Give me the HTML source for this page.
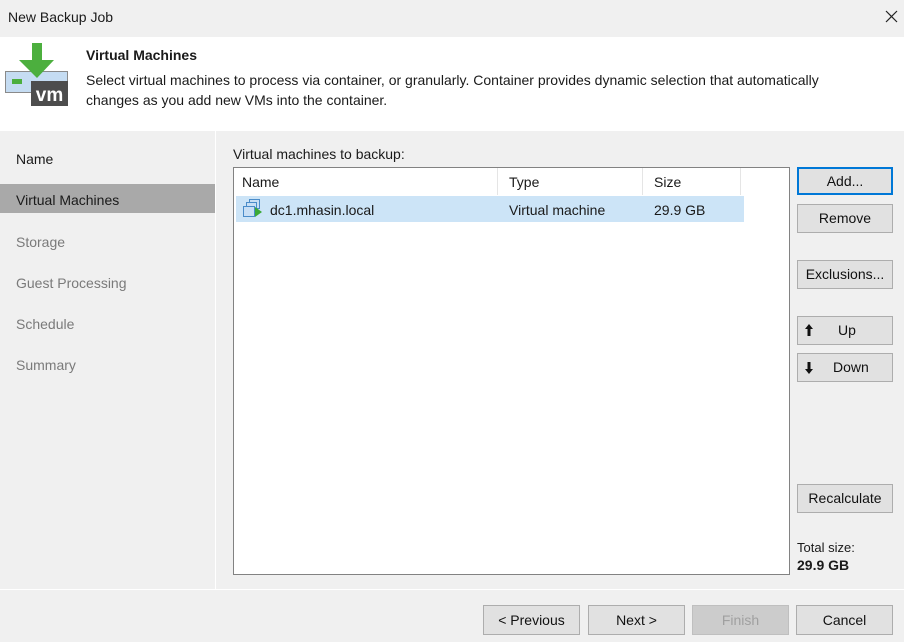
<!DOCTYPE html>
<html><head><meta charset="utf-8"><style>
*{box-sizing:border-box;margin:0;padding:0}
body{width:904px;height:642px;background:#f0f0f0;font-family:"Liberation Sans",sans-serif;font-size:14px;color:#1a1a1a;position:relative;overflow:hidden}
.a{position:absolute}
.btn{position:absolute;background:#e1e1e1;border:1px solid #adadad;text-align:center;font-size:14px;line-height:26px;color:#111}
.nav{position:absolute;left:16px;font-size:14px}
</style></head><body>
<div class="a" style="left:8px;top:9px;font-size:14px">New Backup Job</div>
<svg class="a" style="left:885px;top:10px" width="13" height="13"><path d="M1 1L12 12M12 1L1 12" stroke="#222" stroke-width="1.2"/></svg>
<div class="a" style="left:0;top:37px;width:904px;height:94px;background:#fff"></div>
<svg class="a" style="left:0;top:36px" width="80" height="80">
<rect x="5.5" y="35.5" width="62" height="21" fill="#c5dcf2" stroke="#8a8a8a"/>
<rect x="12" y="43" width="10" height="5" fill="#4caf3e"/>
<rect x="31" y="45" width="37" height="25" fill="#4d4d4d"/>
<text x="49.5" y="65" font-family="Liberation Sans" font-weight="bold" font-size="19" fill="#fff" text-anchor="middle">vm</text>
<path d="M32 7H42V24H54L37 42L19 24H32Z" fill="#4caf3e"/>
</svg>
<div class="a" style="left:86px;top:47px;font-weight:bold;font-size:14px">Virtual Machines</div>
<div class="a" style="left:86px;top:70px;font-size:14px;line-height:20px;width:765px">Select virtual machines to process via container, or granularly. Container provides dynamic selection that automatically changes as you add new VMs into the container.</div>
<div class="a" style="left:215px;top:131px;width:1px;height:458px;background:#fff"></div>
<div class="a" style="left:0;top:589px;width:904px;height:1px;background:#fff"></div>
<div class="nav" style="top:151px">Name</div>
<div class="a" style="left:0;top:184px;width:215px;height:29px;background:#a9a9a9"></div>
<div class="nav" style="top:192px">Virtual Machines</div>
<div class="nav" style="top:234px;color:#7a7a7a">Storage</div>
<div class="nav" style="top:275px;color:#7a7a7a">Guest Processing</div>
<div class="nav" style="top:316px;color:#7a7a7a">Schedule</div>
<div class="nav" style="top:357px;color:#7a7a7a">Summary</div>
<div class="a" style="left:233px;top:146px">Virtual machines to backup:</div>
<div class="a" style="left:233px;top:167px;width:557px;height:408px;background:#fff;border:1px solid #828282"></div>
<div class="a" style="left:497px;top:168px;width:1px;height:27px;background:#e5e5e5"></div>
<div class="a" style="left:642px;top:168px;width:1px;height:27px;background:#e5e5e5"></div>
<div class="a" style="left:740px;top:168px;width:1px;height:27px;background:#e5e5e5"></div>
<div class="a" style="left:242px;top:174px">Name</div>
<div class="a" style="left:509px;top:174px">Type</div>
<div class="a" style="left:654px;top:174px">Size</div>
<div class="a" style="left:236px;top:196px;width:508px;height:26px;background:#cce4f7"></div>
<svg class="a" style="left:242px;top:198px" width="22" height="22">
<rect x="7.5" y="1.5" width="10" height="9" fill="#c8dff5" stroke="#4a8cc9"/>
<rect x="4.5" y="4.5" width="10" height="9" fill="#c8dff5" stroke="#4a8cc9"/>
<rect x="1.5" y="8.5" width="11" height="10" fill="#c8dff5" stroke="#4a8cc9"/>
<path d="M13 9L20 14L13 19Z" fill="#3aa935"/>
</svg>
<div class="a" style="left:270px;top:202px">dc1.mhasin.local</div>
<div class="a" style="left:509px;top:202px">Virtual machine</div>
<div class="a" style="left:654px;top:202px">29.9 GB</div>
<div class="btn" style="left:797px;top:167px;width:96px;height:28px;border:2px solid #0078d7;line-height:24px">Add...</div>
<div class="btn" style="left:797px;top:204px;width:96px;height:29px">Remove</div>
<div class="btn" style="left:797px;top:260px;width:96px;height:29px">Exclusions...</div>
<div class="btn" style="left:797px;top:316px;width:96px;height:29px;padding-left:4px">Up</div>
<div class="btn" style="left:797px;top:353px;width:96px;height:29px;padding-left:4px">&nbsp;&nbsp;Down</div>
<svg class="a" style="left:804px;top:323px" width="10" height="14"><path d="M5 1L9 6H6.5V13H3.5V6H1Z" fill="#111"/></svg>
<svg class="a" style="left:804px;top:361px" width="10" height="14"><path d="M5 13L9 8H6.5V1H3.5V8H1Z" fill="#111"/></svg>
<div class="btn" style="left:797px;top:484px;width:96px;height:29px">Recalculate</div>
<div class="a" style="left:797px;top:540px;font-size:13px">Total size:</div>
<div class="a" style="left:797px;top:557px;font-weight:bold;font-size:14px">29.9 GB</div>
<div class="btn" style="left:483px;top:605px;width:97px;height:30px;line-height:28px">&lt; Previous</div>
<div class="btn" style="left:588px;top:605px;width:97px;height:30px;line-height:28px">Next &gt;</div>
<div class="btn" style="left:692px;top:605px;width:97px;height:30px;line-height:28px;background:#cccccc;border-color:#bfbfbf;color:#a0a0a0">Finish</div>
<div class="btn" style="left:796px;top:605px;width:97px;height:30px;line-height:28px">Cancel</div>
</body></html>
